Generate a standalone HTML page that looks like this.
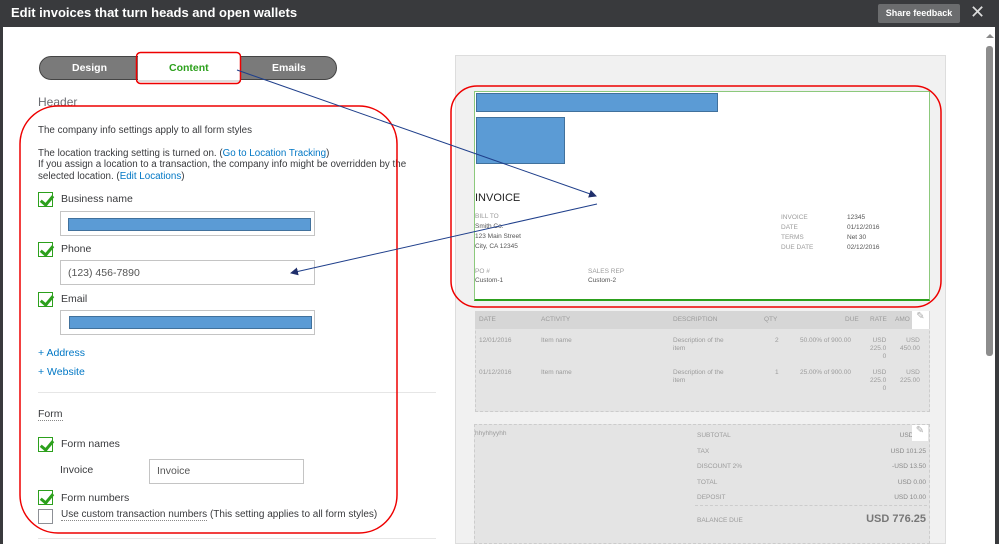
<!DOCTYPE html>
<html><head><meta charset="utf-8"><style>
*{margin:0;padding:0;box-sizing:border-box}
body{width:999px;height:544px;overflow:hidden;background:#fff;font-family:"Liberation Sans",sans-serif;position:relative;color:#393a3d}
.a{position:absolute}
.t{font-size:9.8px;color:#393a3d;white-space:nowrap}
.lnk{color:#0077c5}
.cb{position:absolute;width:15px;height:15px;border:1px solid #8d9096;background:#fff}
.cb.on::after{content:"";position:absolute;left:4px;top:0px;width:5px;height:10px;border:solid #2ca01c;border-width:0 3px 3px 0;transform:rotate(40deg)}
.inp{position:absolute;border:1px solid #c4c4c4;background:#fff;height:25px}
.bar{position:absolute;background:#5b9bd5;border:1px solid #41719c}
.g{font-size:6.5px;color:#9b9b9b;white-space:nowrap}
.d{font-size:6.5px;color:#555;white-space:nowrap}
</style></head><body>
<div class="a" style="left:0;top:0;width:999px;height:27px;background:#393a3d"></div>
<div class="a" style="left:11px;top:5px;font-size:13px;font-weight:bold;color:#fff">Edit invoices that turn heads and open wallets</div>
<div class="a" style="left:878px;top:4px;width:82px;height:19px;background:#6b6c6e;border-radius:2px;color:#fff;font-size:9px;font-weight:bold;text-align:center;line-height:19px">Share feedback</div>
<div class="a" style="left:970px;top:2px;color:#ddd;font-size:18px">✕</div>
<div class="a" style="left:0;top:27px;width:3px;height:517px;background:#393a3d"></div>
<div class="a" style="left:995px;top:27px;width:4px;height:517px;background:#393a3d"></div>
<div class="a" style="left:986px;top:46px;width:7px;height:310px;background:#8d8d8d;border-radius:3px"></div>
<div class="a" style="left:986px;top:34px;width:0;height:0;border:4px solid transparent;border-bottom-color:#888;border-top:0"></div>

<div class="a" style="left:39px;top:56px;width:298px;height:24px;background:#7a7a7a;border:1px solid #444;border-radius:12px"></div>
<div class="a" style="left:72px;top:62px;color:#fff;font-weight:bold;font-size:10.5px">Design</div>
<div class="a" style="left:272px;top:62px;color:#fff;font-weight:bold;font-size:10.5px">Emails</div>
<div class="a" style="left:138px;top:54px;width:102px;height:28px;background:#fff;border-bottom:2px solid #ddd"></div>
<div class="a" style="left:169px;top:62px;color:#2ca01c;font-weight:bold;font-size:10.5px">Content</div>

<div class="a" style="left:38px;top:95px;font-size:12px;color:#6b6c72">Header</div>
<div class="a t" style="left:38px;top:125px">The company info settings apply to all form styles</div>
<div class="a t" style="left:38px;top:148px">The location tracking setting is turned on. (<span class="lnk">Go to Location Tracking</span>)</div>
<div class="a t" style="left:38px;top:159px">If you assign a location to a transaction, the company info might be overridden by the</div>
<div class="a t" style="left:38px;top:171px">selected location. (<span class="lnk">Edit Locations</span>)</div>

<div class="cb on" style="left:38px;top:192px;border-color:#2ca01c"></div>
<div class="a t" style="left:61px;top:193px;font-size:10.5px">Business name</div>
<div class="inp" style="left:60px;top:211px;width:255px"></div>
<div class="bar" style="left:68px;top:218px;width:243px;height:13px"></div>
<div class="cb on" style="left:38px;top:242px;border-color:#2ca01c"></div>
<div class="a t" style="left:61px;top:243px;font-size:10.5px">Phone</div>
<div class="inp" style="left:60px;top:260px;width:255px"></div>
<div class="a t" style="left:68px;top:267px;font-size:10.5px;color:#555">(123) 456-7890</div>
<div class="cb on" style="left:38px;top:292px;border-color:#2ca01c"></div>
<div class="a t" style="left:61px;top:293px;font-size:10.5px">Email</div>
<div class="inp" style="left:60px;top:310px;width:255px"></div>
<div class="bar" style="left:69px;top:316px;width:243px;height:13px"></div>
<div class="a t lnk" style="left:38px;top:347px;font-size:10.5px">+ Address</div>
<div class="a t lnk" style="left:38px;top:366px;font-size:10.5px">+ Website</div>
<div class="a" style="left:38px;top:392px;width:398px;height:1px;background:#e6e6e6"></div>
<div class="a t" style="left:38px;top:408px;font-size:10.5px;border-bottom:1px dotted #888">Form</div>
<div class="cb on" style="left:38px;top:437px;border-color:#2ca01c"></div>
<div class="a t" style="left:61px;top:438px;font-size:10.5px">Form names</div>
<div class="a t" style="left:60px;top:464px;font-size:10.5px">Invoice</div>
<div class="inp" style="left:149px;top:459px;width:155px"></div>
<div class="a t" style="left:157px;top:465px;font-size:10.5px;color:#555">Invoice</div>
<div class="cb on" style="left:38px;top:490px;border-color:#2ca01c"></div>
<div class="a t" style="left:61px;top:492px;font-size:10.5px">Form numbers</div>
<div class="cb" style="left:38px;top:509px"></div>
<div class="a t" style="left:61px;top:509px;font-size:10px"><span style="border-bottom:1px dotted #888">Use custom transaction numbers</span> (This setting applies to all form styles)</div>
<div class="a" style="left:38px;top:538px;width:398px;height:1px;background:#e6e6e6"></div>

<div class="a" style="left:455px;top:55px;width:491px;height:489px;background:#f1f1f1;border:1px solid #ddd"></div>
<div class="a" style="left:474px;top:91px;width:456px;height:210px;background:#fff;border:1px solid #8cc97c;border-bottom:2px solid #2ca01c"></div>
<div class="bar" style="left:476px;top:93px;width:242px;height:19px"></div>
<div class="bar" style="left:476px;top:117px;width:89px;height:47px"></div>
<div class="a" style="left:475px;top:192px;font-size:11px;color:#222">INVOICE</div>
<div class="a g" style="left:475px;top:213px">BILL TO</div>
<div class="a d" style="left:475px;top:223px">Smith Co.</div>
<div class="a d" style="left:475px;top:233px">123 Main Street</div>
<div class="a d" style="left:475px;top:243px">City, CA 12345</div>
<div class="a g" style="left:781px;top:213px;line-height:10px">INVOICE<br>DATE<br>TERMS<br>DUE DATE</div>
<div class="a d" style="left:847px;top:213px;line-height:10px">12345<br>01/12/2016<br>Net 30<br>02/12/2016</div>
<div class="a g" style="left:475px;top:268px">PO #</div>
<div class="a d" style="left:475px;top:277px">Custom-1</div>
<div class="a g" style="left:588px;top:268px">SALES REP</div>
<div class="a d" style="left:588px;top:277px">Custom-2</div>

<div class="a" style="left:475px;top:311px;width:455px;height:101px;background:#e4e4e4;border:1px dashed #ccc"></div>
<div class="a" style="left:475px;top:311px;width:455px;height:18px;background:#d6d6d6"></div>
<div class="a" style="left:912px;top:311px;width:17px;height:18px;background:#fff;color:#aaa;font-size:10px;text-align:center">✎</div>
<div class="a g" style="left:479px;top:316px">DATE</div>
<div class="a g" style="left:541px;top:316px">ACTIVITY</div>
<div class="a g" style="left:673px;top:316px">DESCRIPTION</div>
<div class="a g" style="left:764px;top:316px">QTY</div>
<div class="a g" style="left:845px;top:316px">DUE</div>
<div class="a g" style="left:870px;top:316px">RATE</div>
<div class="a g" style="left:895px;top:316px">AMO</div>
<div class="a g" style="left:479px;top:337px">12/01/2016</div>
<div class="a g" style="left:541px;top:337px">Item name</div>
<div class="a g" style="left:673px;top:337px;line-height:8px">Description of the<br>item</div>
<div class="a g" style="left:775px;top:337px">2</div>
<div class="a g" style="left:800px;top:337px">50.00% of 900.00</div>
<div class="a g" style="left:870px;top:337px;line-height:8px;text-align:right">USD<br>225.0<br>0</div>
<div class="a g" style="left:900px;top:337px;line-height:8px;text-align:right">USD<br>450.00</div>
<div class="a g" style="left:479px;top:369px">01/12/2016</div>
<div class="a g" style="left:541px;top:369px">Item name</div>
<div class="a g" style="left:673px;top:369px;line-height:8px">Description of the<br>item</div>
<div class="a g" style="left:775px;top:369px">1</div>
<div class="a g" style="left:800px;top:369px">25.00% of 900.00</div>
<div class="a g" style="left:870px;top:369px;line-height:8px;text-align:right">USD<br>225.0<br>0</div>
<div class="a g" style="left:900px;top:369px;line-height:8px;text-align:right">USD<br>225.00</div>

<div class="a" style="left:474px;top:424px;width:456px;height:120px;background:#e4e4e4;border:1px dashed #ccc"></div>
<div class="a g" style="left:475px;top:430px">hhyhhyyhh</div>
<div class="a g" style="left:697px;top:428px;line-height:15.5px">SUBTOTAL<br>TAX<br>DISCOUNT 2%<br>TOTAL<br>DEPOSIT</div>
<div class="a g" style="left:860px;top:428px;line-height:15.5px;text-align:right;width:66px;color:#888">USD 675<br>USD 101.25<br>-USD 13.50<br>USD 0.00<br>USD 10.00</div>
<div class="a" style="left:912px;top:425px;width:16px;height:16px;background:#fff;color:#aaa;font-size:10px;text-align:center">✎</div>
<div class="a" style="left:695px;top:505px;width:232px;border-top:1px dashed #ccc"></div>
<div class="a g" style="left:697px;top:517px">BALANCE DUE</div>
<div class="a" style="left:840px;top:513px;font-size:11px;color:#777;font-weight:bold;width:86px;text-align:right">USD 776.25</div>

<svg class="a" style="left:0;top:0" width="999" height="544">
<defs><marker id="m" markerWidth="8" markerHeight="8" refX="7" refY="4" orient="auto" markerUnits="userSpaceOnUse"><path d="M0,0 L8,4 L0,8 Z" fill="#1f2f6b"/></marker></defs>
<rect x="136.5" y="52.5" width="104" height="31" rx="4" fill="none" stroke="#e00" stroke-width="1.5"/>
<rect x="20" y="106" width="377" height="427" rx="38" fill="none" stroke="#e00" stroke-width="1.5"/>
<rect x="451" y="86" width="490" height="221" rx="26" fill="none" stroke="#e00" stroke-width="1.5"/>
<line x1="237" y1="70" x2="596" y2="196" stroke="#1f3f8b" stroke-width="1" marker-end="url(#m)"/>
<line x1="597" y1="204" x2="291" y2="273" stroke="#1f3f8b" stroke-width="1" marker-end="url(#m)"/>
</svg>
</body></html>
